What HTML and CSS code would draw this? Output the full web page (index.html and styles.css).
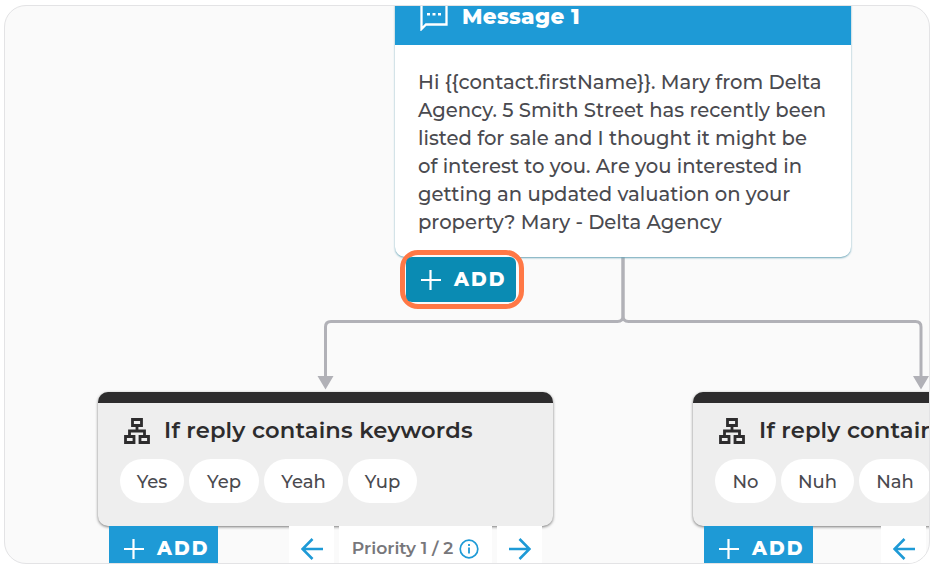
FILE: index.html
```html
<!DOCTYPE html>
<html lang="en">
<head>
  <meta charset="UTF-8" />
  <meta name="viewport" content="width=device-width, initial-scale=1.0" />
  <title>Message flow</title>
  <link rel="stylesheet" href="styles.css">
</head>
<body>
  <svg class="hidden">
    <symbol id="icon-plus" viewBox="0 0 20 20"><path d="M9.500 0v20M0 10h20" fill="none" stroke="currentColor" stroke-width="2.2" /></symbol>
    <symbol id="icon-left" viewBox="0 0 22 22"><path d="M22 11H1.500M11.500 1L1.500 11l10 10" fill="none" stroke="currentColor" stroke-width="2.6" /></symbol>
    <symbol id="icon-right" viewBox="0 0 22 22"><path d="M0 11h20.500M10.500 1l10 10-10 10" fill="none" stroke="currentColor" stroke-width="2.6" /></symbol>
    <symbol id="icon-info" viewBox="0 0 20 20"><circle cx="10" cy="10" r="8.800" fill="none" stroke="currentColor" stroke-width="1.700" /><path d="M10 8.500v6M10 5v2" fill="none" stroke="currentColor" stroke-width="1.800" /></symbol>
    <symbol id="icon-tree" viewBox="0 0 26 26"><path d="M8.500 1.500h9v6h-9zM1.500 18.500h8.500v6H1.500zM16 18.500h8.500v6H16zM13 7.500V13M5.500 18.500V13h15v5.500" fill="none" stroke="currentColor" stroke-width="2.800" /></symbol>
  </svg>

  <div class="canvas">
    <svg class="lines" viewBox="0 0 924 557">
      <g fill="none" stroke="#b1b1b7" stroke-width="3">
        <path d="M618 251v59q0 5.500-5.500 5.500H326q-5.500 0-5.500 5.500v51" />
        <path d="M618 251v59q0 5.500 5.500 5.500H910.500q5.500 0 5.500 5.500v51" />
      </g>
      <path d="M312.500 370h16l-8 13.500zM908 370h16l-8 13.500z" fill="#b1b1b7" />
    </svg>

    <div class="node message">
      <div class="message-head">
        <svg class="chat" viewBox="0 0 30 30"><path d="M2.500 28V3h25V23.500H7z" fill="none" stroke="currentColor" stroke-width="2.300" /><path d="M8 13.300h3M13.500 13.300h3M19 13.300h3" stroke="currentColor" stroke-width="2.600" /></svg>
        <span class="message-title">Message 1</span>
      </div>
      <div class="message-body">
        Hi {{contact.firstName}}. Mary from Delta<br>
        Agency. 5 Smith Street has recently been<br>
        listed for sale and I thought it might be<br>
        of interest to you. Are you interested in<br>
        getting an updated valuation on your<br>
        property? Mary - Delta Agency
      </div>
    </div>
    <div class="ring">
      <div class="add active"><svg><use href="#icon-plus" /></svg><span>ADD</span></div>
    </div>

    <div class="node condition first">
      <div class="condition-box">
        <div class="condition-title"><svg><use href="#icon-tree" /></svg><span>If reply contains keywords</span></div>
        <div class="chips">
          <span class="chip yes">Yes</span>
          <span class="chip yep">Yep</span>
          <span class="chip yeah">Yeah</span>
          <span class="chip yup">Yup</span>
        </div>
      </div>
      <div class="actions">
        <div class="add"><svg><use href="#icon-plus" /></svg><span>ADD</span></div>
        <div class="arrow prev"><svg><use href="#icon-left" /></svg></div>
        <div class="priority"><span>Priority 1 / 2</span><svg><use href="#icon-info" /></svg></div>
        <div class="arrow"><svg><use href="#icon-right" /></svg></div>
      </div>
    </div>

    <div class="node condition second">
      <div class="condition-box">
        <div class="condition-title"><svg><use href="#icon-tree" /></svg><span>If reply contains</span></div>
        <div class="chips">
          <span class="chip no">No</span>
          <span class="chip nuh">Nuh</span>
          <span class="chip nah">Nah</span>
        </div>
      </div>
      <div class="actions">
        <div class="add"><svg><use href="#icon-plus" /></svg><span>ADD</span></div>
        <div class="arrow prev"><svg><use href="#icon-left" /></svg></div>
      </div>
    </div>
  </div>
</body>
</html>
```
FILE: styles.css
```css
* {
  box-sizing: border-box;
}
body {
  margin: 0;
  padding: 5px 4px;
  background: #fff;
  font-family: Montserrat, Inter, sans-serif;
  color: #4a4a4f;
}
.hidden {
  display: none;
}
.canvas {
  position: relative;
  width: 926px;
  height: 559px;
  border: 1px solid #e3e3e5;
  border-radius: 22px;
  background: #fafafa;
  overflow: hidden;
  white-space: nowrap;
}
.lines {
  position: absolute;
  left: 0;
  top: 0;
  width: 924px;
  height: 557px;
}
.node {
  position: absolute;
  width: 455px;
}

/* message node */
.message {
  left: 390px;
  top: -16px;
  width: 456px;
  height: 267px;
  background: #fff;
  border-radius: 10px;
  box-shadow: 0 1px 2px #6aa5b8;
}
.message-head {
  display: flex;
  align-items: center;
  height: 55px;
  padding: 0 0 3px 24px;
  background: #1e9ad6;
  color: #fff;
}
.chat {
  width: 30px;
  height: 30px;
}
.message-title {
  margin-left: 13px;
  font-size: 21.5px;
  font-weight: 800;
  letter-spacing: 0.3px;
}
.message-body {
  padding: 23px 0 0 23px;
  font-size: 19.6px;
  line-height: 28px;
  font-weight: 500;
}

/* add button */
.add {
  display: flex;
  align-items: center;
  width: 109px;
  height: 45px;
  padding-left: 15px;
  background: #1e9ad6;
  color: #fff;
  font-size: 19px;
  font-weight: 800;
  letter-spacing: 2px;
}
.add svg {
  width: 20px;
  height: 20px;
  margin-right: 13px;
}
.ring {
  position: absolute;
  left: 395px;
  top: 244px;
  width: 124px;
  height: 59px;
  padding: 2px 1px;
  border: 5px solid #ff7846;
  border-radius: 18px;
  background: #fafafa;
}
.active {
  width: 110px;
  background: #0a8bb3;
  border-radius: 6px;
}

/* condition nodes */
.condition {
  top: 386px;
}
.first {
  left: 93px;
}
.second {
  left: 688px;
}
.condition-box {
  height: 134px;
  padding: 13px 22px 0;
  border-top: 11px solid #2d2c2d;
  border-radius: 10px;
  background: #eee;
  box-shadow: 0 1px 3px #777;
}
.condition-title {
  display: flex;
  align-items: center;
  height: 28px;
  padding-left: 4px;
  font-size: 22.6px;
  font-weight: 600;
  letter-spacing: 0.17px;
  color: #2d2c2d;
}
.condition-title svg {
  width: 26px;
  height: 26px;
  margin: 2px 14px 0 0;
}
.chips {
  display: flex;
  gap: 5px;
  margin-top: 15px;
}
.chip {
  height: 44px;
  flex: none;
  border-radius: 22px;
  background: #fff;
  font-size: 18px;
  font-weight: 500;
  line-height: 46px;
  text-align: center;
}
.yes { width: 64px; }
.yep { width: 70px; }
.yeah { width: 79px; }
.yup { width: 69px; }
.no { width: 61px; }
.nuh { width: 73px; }
.nah { width: 72px; }
.actions {
  position: relative;
  display: flex;
  gap: 5px;
  margin-left: 11px;
}
.arrow,
.priority {
  display: flex;
  flex: none;
  align-items: center;
  justify-content: center;
  width: 45px;
  height: 45px;
  background: #fff;
  color: #1e9ad6;
}
.arrow svg {
  width: 22px;
  height: 22px;
}
.prev {
  margin-left: 66px;
}
.second .prev {
  margin-left: 63px;
}
.priority {
  width: 153px;
}
.priority span {
  color: #77777b;
  font-size: 17.2px;
  font-weight: 600;
  line-height: 20px;
  margin-bottom: 2px;
}
.priority svg {
  width: 20px;
  height: 20px;
  margin-left: 6px;
}
```
